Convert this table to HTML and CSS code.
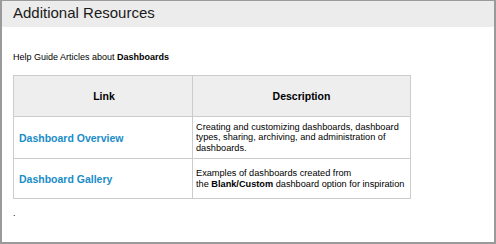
FILE: index.html
```html
<!DOCTYPE html>
<html lang="en">
<head>
    <meta charset="UTF-8">
    <title>Additional Resources</title>
    <link rel="stylesheet" href="styles.css">
</head>
<body>

    <div class="panel">
        <div class="panel-title">Additional Resources</div>

        <div class="panel-body">
            <p class="intro">Help Guide Articles about <b>Dashboards</b></p>

            <table class="resources">
                <tr class="head-row">
                    <th class="col-link">Link</th>
                    <th>Description</th>
                </tr>
                <tr class="row-tall">
                    <td class="col-link"><a href="#">Dashboard Overview</a></td>
                    <td class="desc">Creating and customizing dashboards, dashboard<br>types, sharing, archiving, and administration of<br>dashboards.</td>
                </tr>
                <tr class="row-short">
                    <td class="col-link"><a href="#">Dashboard Gallery</a></td>
                    <td class="desc">Examples of dashboards created from<br>the <b>Blank/Custom</b> dashboard option for inspiration</td>
                </tr>
            </table>

            <p class="note">.</p>
        </div>
    </div>

</body>
</html>
```

FILE: styles.css
```css
body {
    margin: 0;
    font-family: "Liberation Sans", Arial, sans-serif;
    color: #000;
    background: #fff;
}

.panel {
    width: 496px;
    height: 244px;
    box-sizing: border-box;
    border: 2px solid #9a9a9a;
    border-top-width: 1px;
    overflow: hidden;
}

.panel-title {
    height: 26px;
    line-height: 24px;
    padding-left: 11px;
    background: #ececec;
    font-size: 15px;
    color: #1a1a1a;
}

.panel-body {
    padding: 25px 11px 0 11px;
}

.intro {
    margin: 0 0 12px 0;
    font-size: 9px;
    line-height: 11px;
}

/* Resources table */
.resources {
    width: 398px;
    table-layout: fixed;
    border-collapse: collapse;
    font-size: 9.2px;
}

.resources th,
.resources td {
    border: 1px solid #cccccc;
    padding: 0 3px;
    vertical-align: middle;
}

.resources th {
    background: #eeeeee;
    font-size: 10.5px;
    text-align: center;
}

.resources .col-link {
    width: 170px;
    padding-left: 5px;
}

.head-row { height: 41px; }
.row-tall { height: 42px; }
.row-short { height: 40px; }

.resources a {
    color: #1a8cc8;
    font-weight: bold;
    font-size: 10.5px;
    text-decoration: none;
}

.desc {
    line-height: 10.4px;
    white-space: nowrap;
}

.note {
    margin: 9px 0 0 0;
    font-size: 9px;
    line-height: 11px;
}
```
